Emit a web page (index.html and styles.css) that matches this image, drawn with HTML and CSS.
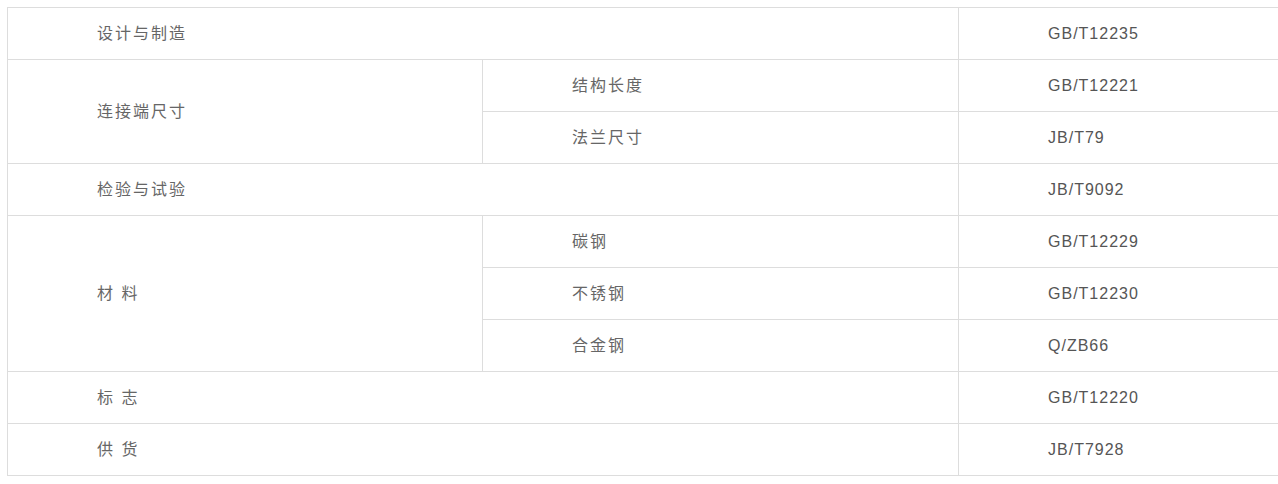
FILE: index.html
```html
<!DOCTYPE html>
<html lang="zh">
<head>
<meta charset="utf-8">
<link rel="stylesheet" href="styles.css">
</head>
<body>
<table class="spec">
  <colgroup><col class="c1"><col class="c2"><col class="c3"></colgroup>
  <tr><td colspan="2">设计与制造</td><td class="code">GB/T12235</td></tr>
  <tr><td rowspan="2">连接端尺寸</td><td>结构长度</td><td class="code">GB/T12221</td></tr>
  <tr><td>法兰尺寸</td><td class="code">JB/T79</td></tr>
  <tr><td colspan="2">检验与试验</td><td class="code">JB/T9092</td></tr>
  <tr><td rowspan="3">材 料</td><td>碳钢</td><td class="code">GB/T12229</td></tr>
  <tr><td>不锈钢</td><td class="code">GB/T12230</td></tr>
  <tr><td>合金钢</td><td class="code">Q/ZB66</td></tr>
  <tr><td colspan="2">标 志</td><td class="code">GB/T12220</td></tr>
  <tr><td colspan="2">供 货</td><td class="code">JB/T7928</td></tr>
</table>
</body>
</html>
```

FILE: styles.css
```css
html, body {
  margin: 0;
  padding: 0;
  overflow: hidden;
  background: #fff;
}
body {
  padding: 7px 0 0 7px;
  font-family: "Liberation Sans", Arial, "Noto Sans CJK SC", sans-serif;
  font-size: 16px;
  color: #666;
}
.spec {
  border-collapse: collapse;
  table-layout: fixed;
  width: 1271px;
}
.spec .c1 { width: 475px; }
.spec .c2 { width: 476px; }
.spec .c3 { width: 320px; }
.spec td {
  border: 1px solid #ddd;
  height: 52px;
  padding: 0 0 0 89px;
  box-sizing: border-box;
  vertical-align: middle;
  letter-spacing: 2px;
  line-height: 20px;
}
.spec td.code {
  color: #555;
  letter-spacing: 1px;
  border-right: none;
}
```
